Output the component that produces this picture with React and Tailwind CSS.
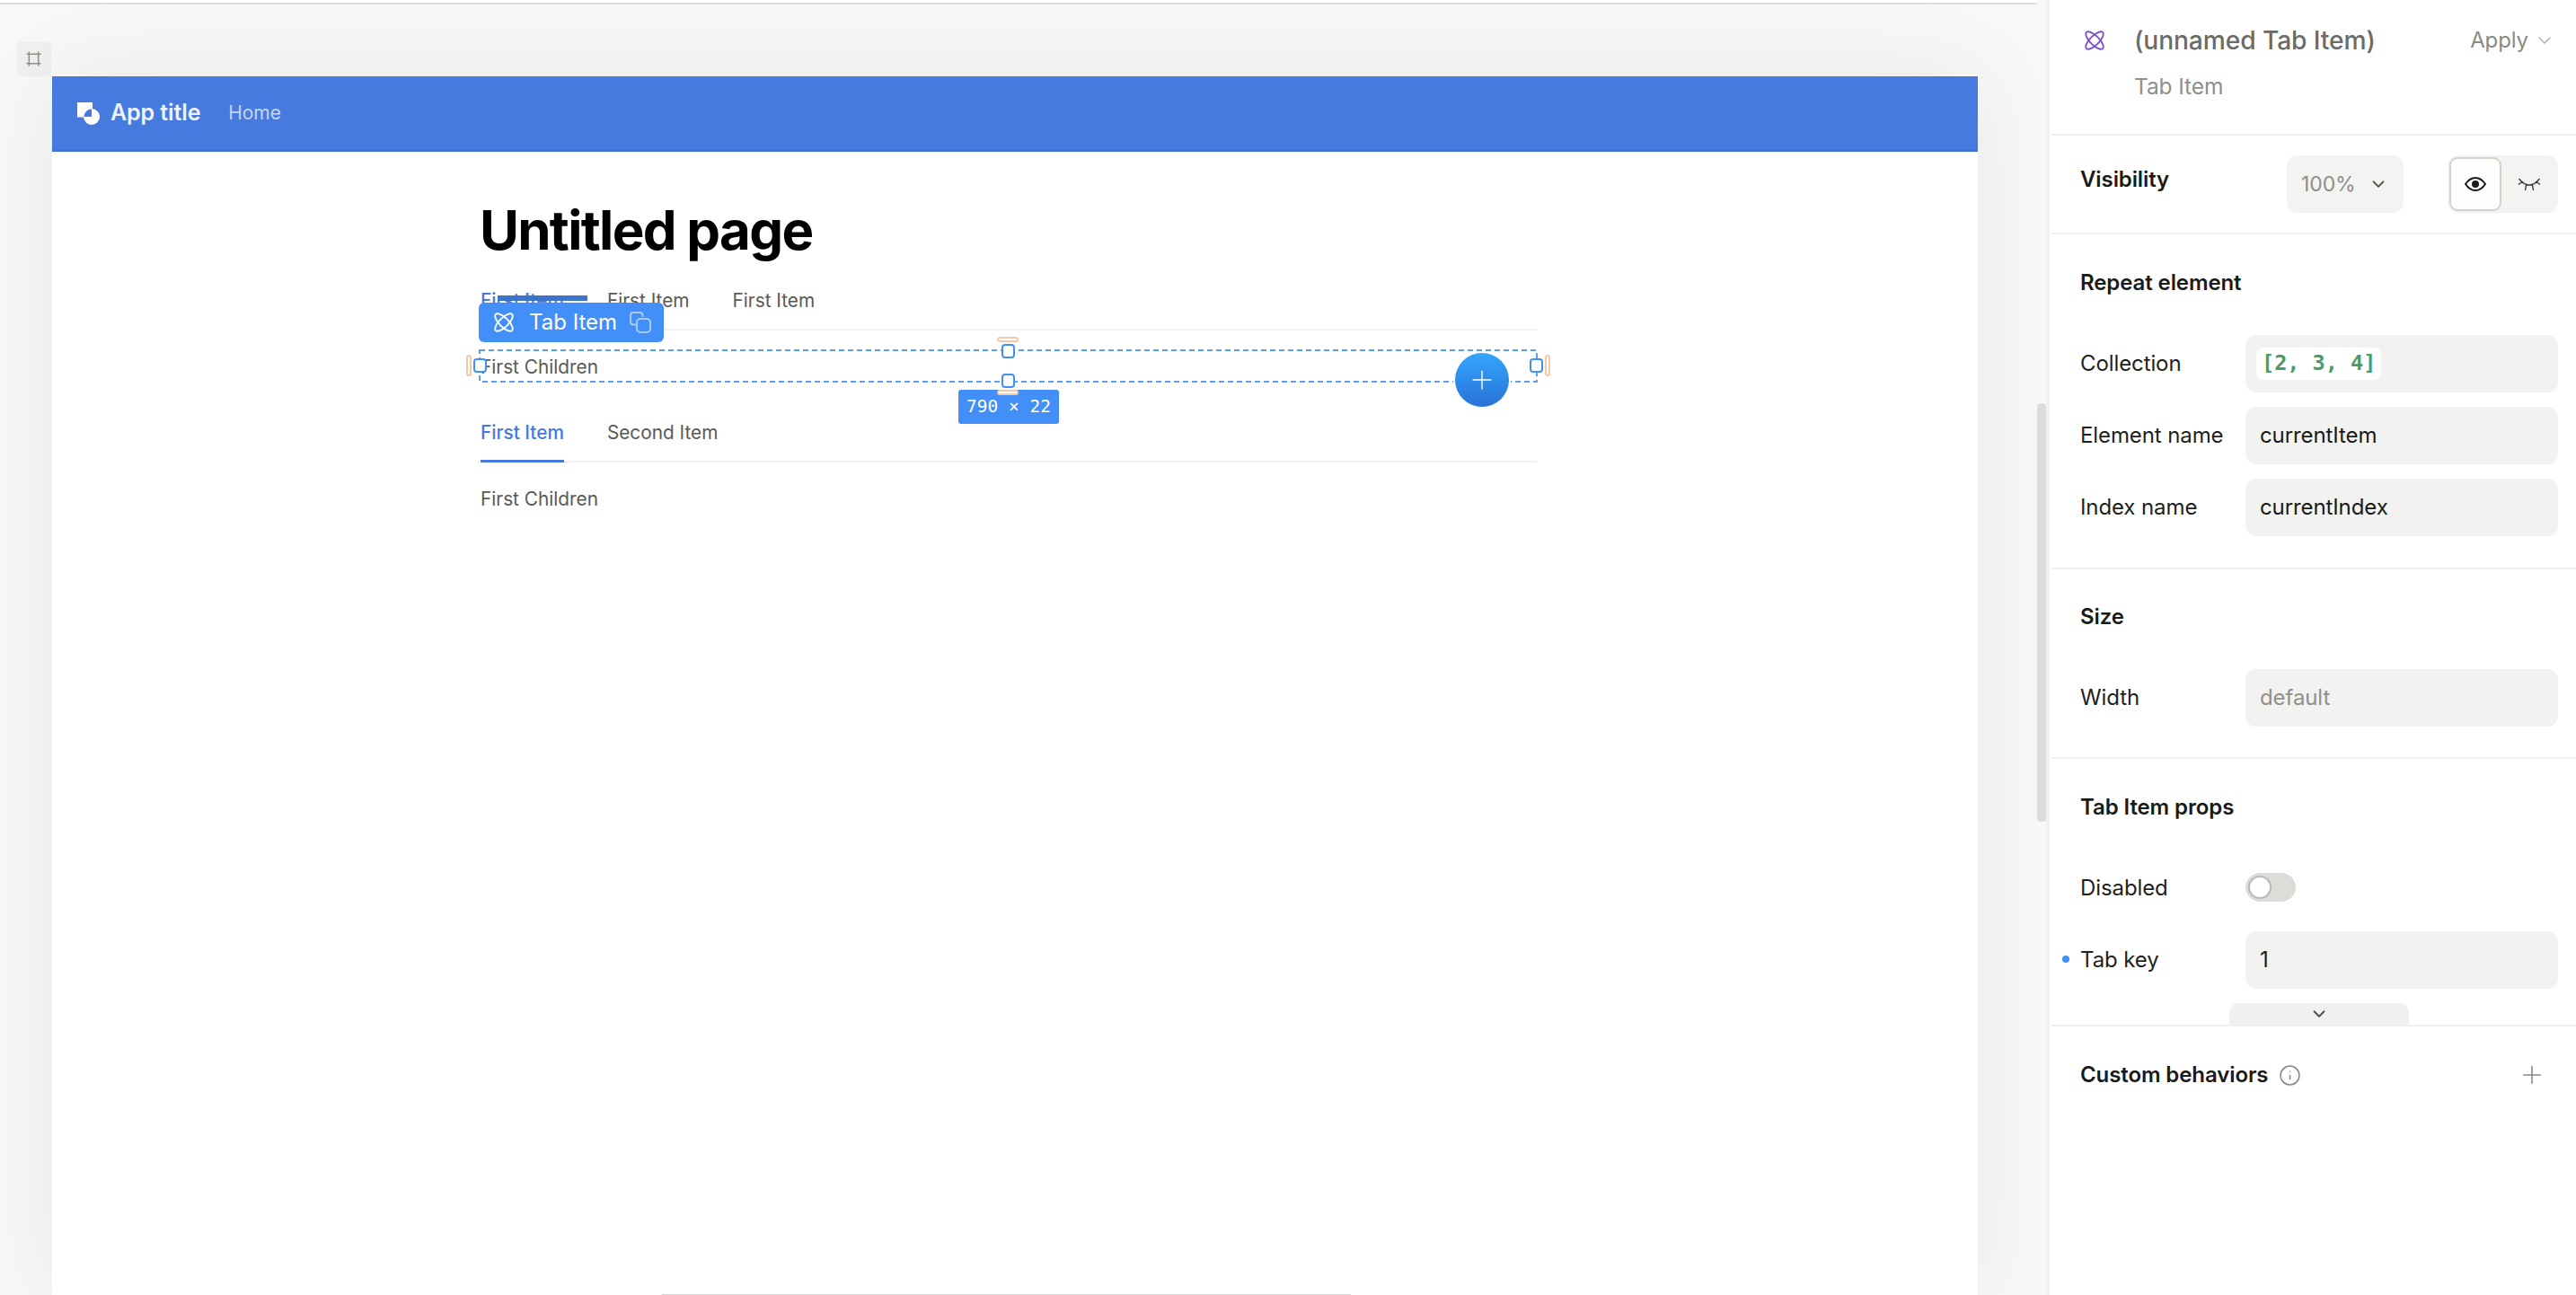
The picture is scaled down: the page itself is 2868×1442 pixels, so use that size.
import { Plus, ChevronDown, Info } from "lucide-react";

function TabIcon({ className }) {
  return (
    <svg viewBox="0 0 24 24" fill="none" stroke="currentColor" strokeWidth="2" className={className}>
      <ellipse cx="12" cy="12" rx="14" ry="5.5" transform="rotate(45 12 12)" />
      <ellipse cx="12" cy="12" rx="14" ry="5.5" transform="rotate(-45 12 12)" />
    </svg>
  );
}

function FrameIcon() {
  return (
    <svg viewBox="0 0 18 18" fill="none" stroke="#8f8f8b" strokeWidth="1.6" className="w-[17px] h-[17px]">
      <path d="M0.5 3.500h17M0.500 14.500h17M3.500 0.500v17M14.500 0.500v17" />
    </svg>
  );
}

function Logo() {
  return (
    <svg viewBox="0 0 25 25" className="w-[25px] h-[25px] shrink-0">
      <rect x="0" y="0" width="17" height="16.5" fill="#fff" />
      <circle cx="16" cy="16" r="9" fill="#fff" />
      <path d="M16 16V7.500A8.500 8.500 0 0 0 7.500 16Z" fill="#477ade" />
    </svg>
  );
}

function CopyIcon() {
  return (
    <svg viewBox="0 0 24 24" fill="none" stroke="#a9cbfb" strokeWidth="2" className="w-[24px] h-[24px]">
      <path d="M7 14.500H4a3 3 0 0 1-3-3V4a3 3 0 0 1 3-3h7.500a3 3 0 0 1 3 3v2" />
      <rect x="8" y="8" width="15" height="15" rx="4" />
    </svg>
  );
}

function EyeOpen() {
  return (
    <svg viewBox="0 0 24 16" className="w-[24px] h-[16px]" fill="none" stroke="#1a1a1a" strokeWidth="2">
      <path d="M1 8c3-4.500 6.800-7 11-7s8 2.500 11 7c-3 4.500-6.800 7-11 7S4 12.500 1 8Z" />
      <circle cx="12" cy="8" r="4" fill="#1a1a1a" stroke="none" />
    </svg>
  );
}

function EyeClosed() {
  return (
    <svg viewBox="0 0 26 15" className="w-[26px] h-[15px]" fill="none" stroke="#3a3a38" strokeWidth="1.4">
      <path d="M1.500 1Q13 15 24.500 1M1 7.500 5.500 4M25 7.500 20.500 4M9.500 8l-1 6M16.500 8l1 6" />
    </svg>
  );
}

function Handle({ className }) {
  return <div className={`absolute w-[15px] h-[16px] rounded-[4px] bg-white border-2 border-[#4290f7] ${className}`} />;
}

function Pill({ className }) {
  return <div className={`absolute rounded-full bg-white border-2 border-[#f6c9a6] ${className}`} />;
}

function Tabs({ items, active }) {
  return (
    <div className="flex gap-[48px] h-[50px] border-b-2 border-[#f1f1f1]">
      {items.map((t, i) => (
        <div
          key={i}
          className={`h-[50px] pt-[2px] leading-[30px] ${i === active ? "text-[#4678e0] font-medium border-b-[3px] border-[#477ade]" : "text-[#595959]"}`}
        >
          {t}
        </div>
      ))}
    </div>
  );
}

function Row({ label, value, muted, dot }) {
  return (
    <div className="grid grid-cols-[184px_1fr] items-center h-[64px]">
      <div className="relative text-[#1f1f1d]">
        {dot && <span className="absolute -left-[20px] top-[13px] w-[8px] h-[8px] rounded-full bg-[#4290f7]" />}
        {label}
      </div>
      <div className={`h-[64px] rounded-[12px] bg-[#f2f2f0] pl-[16px] flex items-center ${muted ? "text-[#8f8f8b]" : "text-[#1a1a18]"}`}>
        {value}
      </div>
    </div>
  );
}

function Heading({ children, className = "" }) {
  return <div className={`h-[30px] leading-[30px] font-semibold text-[#1a1a18] ${className}`}>{children}</div>;
}

export default function App() {
  return (
    <div className="flex h-[1442px] overflow-hidden bg-white font-['Inter',sans-serif] text-[24px] tracking-[-0.1px]">
      <div className="flex w-[2282px] shrink-0">
        <div className="relative w-[2268px] h-full overflow-hidden bg-[#f8f8f6]">
          <div className="relative h-[5px] bg-white border-b-2 border-[#dddddd] z-10" />
          <div className="absolute left-[18px] top-[46px] w-[39px] h-[39px] rounded-[6px] bg-[#f0f0ee] flex items-center justify-center">
            <FrameIcon />
          </div>
          <div className="relative ml-[58px] mt-[80px] w-[2144px] h-[1357px] bg-white shadow-[0_0_100px_rgba(0,0,0,0.07)]">
            <div className="h-[84px] bg-[#477ade] border-b-2 border-[#3f71d6] flex items-center pl-[28px] text-white">
              <Logo />
              <span className="ml-[12px] text-[25px] font-semibold text-[#edf2fd]">App title</span>
              <span className="ml-[31px] text-[21px] text-[#c5d6f7]">Home</span>
            </div>
            <div className="ml-[477px] w-[1176px] pt-[51px] text-[20.8px] tracking-normal">
              <h1 className="-ml-[1px] text-[60px] leading-[72px] font-bold text-black tracking-[-1.7px]">Untitled page</h1>
              <div className="mt-[26px]">
                <Tabs items={["First Item", "First Item", "First Item"]} active={0} />
              </div>
              <div className="relative mt-[21px] h-[36px] leading-[40px] text-[#595959]">
                First Children
                <svg className="absolute -left-[2px] top-0 w-[1179px] h-[37px]" fill="none">
                  <rect x="1" y="1" width="1177" height="35" stroke="#5a9ef8" strokeWidth="2" strokeDasharray="6 4" />
                </svg>
                <div className="absolute left-[19px] -top-[60px] w-[100px] h-[6px] bg-[#3b74c9]" />
                <div className="absolute -left-[2px] -top-[52px] w-[206px] h-[44px] rounded-[6px] bg-[#4290f7] flex items-center pl-[17px] text-white text-[24px]">
                  <TabIcon className="w-[22px] h-[22px] shrink-0" />
                  <span className="ml-[17px]">Tab Item</span>
                  <span className="ml-[14px]"><CopyIcon /></span>
                </div>
                <Handle className="left-[580px] -top-[6px]" />
                <Handle className="left-[580px] top-[27px]" />
                <Handle className="-left-[8px] top-[10px]" />
                <Handle className="left-[1168px] top-[10px]" />
                <Pill className="left-[575px] -top-[14px] w-[24px] h-[6px]" />
                <Pill className="left-[575px] top-[45px] w-[24px] h-[6px] z-10" />
                <Pill className="-left-[16px] top-[6px] w-[6px] h-[24px]" />
                <Pill className="left-[1185px] top-[6px] w-[6px] h-[24px]" />
                <div className="absolute left-[532px] top-[45px] w-[112px] h-[38px] rounded-[3px] bg-[#4290f7] flex items-center justify-center text-white text-[19.5px] font-['DejaVu_Sans_Mono',monospace] tracking-normal">
                  790 × 22
                </div>
                <div className="absolute left-[1085px] top-[4px] w-[60px] h-[60px] rounded-full bg-gradient-to-b from-[#33a5fb] to-[#2a73d9] flex items-center justify-center shadow-[0_0_0_2px_#ffffff]">
                  <Plus className="w-[34px] h-[34px] text-white" strokeWidth={1} />
                </div>
              </div>
              <div className="mt-[40px]">
                <Tabs items={["First Item", "Second Item"]} active={0} />
              </div>
              <div className="mt-[26px] leading-[30px] text-[#595959]">First Children</div>
            </div>
            <div className="absolute bottom-0 left-[679px] w-[767px] h-px bg-[#d4d4d4]" />
          </div>
        </div>
        <div className="w-[14px] bg-[#f8f8f6] border-r-4 border-[#f1f1ef] pt-[449px]">
          <div className="w-[10px] h-[466px] rounded-[4px] bg-[#dddcd9]" />
        </div>
      </div>

      <div className="w-[586px] pl-[2px]">
        <div className="h-[151px] border-b-2 border-[#f0f0ee] pt-[30px] pl-[37px] pr-[23px]">
          <div className="flex items-center h-[30px]">
            <TabIcon className="w-[22px] h-[22px] text-[#7d4fd0] shrink-0" />
            <span className="ml-[33px] text-[28.2px] font-medium text-[#6b6b67]">(unnamed Tab Item)</span>
            <span className="ml-auto text-[#8a8a85]">Apply</span>
            <ChevronDown className="ml-[6px] w-[24px] h-[24px] text-[#b5b5b1]" strokeWidth={1.6} />
          </div>
          <div className="mt-[21px] ml-[55px] h-[30px] leading-[30px] text-[24.5px] text-[#8f8f8b]">Tab Item</div>
        </div>

        <div className="h-[110px] border-b-2 border-[#f0f0ee] pt-[22px] pl-[32px] pr-[20px] flex items-start">
          <div className="w-[230px] h-[54px] flex items-center font-semibold text-[#1a1a18]">Visibility</div>
          <div className="w-[130px] h-[64px] rounded-[12px] bg-[#f3f3f1] flex items-center pl-[16px] text-[#8e8e8a] text-[23px]">
            100%
            <ChevronDown className="ml-[14px] w-[22px] h-[22px] text-[#555552]" />
          </div>
          <div className="ml-[49px] w-[123px] h-[64px] rounded-[12px] bg-[#f3f3f1] flex items-center pl-[2px]">
            <div className="w-[58px] h-[60px] rounded-[9px] bg-[#fdfdfb] border-2 border-[#d2d2ce] flex items-center justify-center">
              <EyeOpen />
            </div>
            <div className="ml-[18px]"><EyeClosed /></div>
          </div>
        </div>

        <div className="border-b-2 border-[#f0f0ee] pt-[39px] pb-[35px] pl-[32px] pr-[20px]">
          <Heading className="mb-[43px]">Repeat element</Heading>
          <div className="flex flex-col gap-[16px]">
            <Row
              label="Collection"
              value={
                <span className="-ml-[4px] px-[6px] h-[36px] rounded-[8px] bg-white flex items-center font-['DejaVu_Sans_Mono',monospace] font-bold text-[#4a9a6b] text-[23.5px] tracking-[0px]">
                  [2, 3, 4]
                </span>
              }
            />
            <Row label="Element name" value="currentItem" />
            <Row label="Index name" value="currentIndex" />
          </div>
        </div>

        <div className="border-b-2 border-[#f0f0ee] pt-[38px] pb-[34px] pl-[32px] pr-[20px]">
          <Heading className="mb-[43px]">Size</Heading>
          <Row label="Width" value="default" muted />
        </div>

        <div className="border-b-2 border-[#f0f0ee] pt-[39px] pl-[32px] pr-[20px]">
          <Heading className="mb-[42px]">Tab Item props</Heading>
          <div className="grid grid-cols-[184px_1fr] items-center h-[64px] mb-[17px]">
            <div className="pt-[2px] text-[#1f1f1d]">Disabled</div>
            <div className="w-[56px] h-[32px] rounded-full bg-[#dcdcd8] flex items-center pl-[3px]">
              <div className="w-[26px] h-[26px] rounded-full bg-white border-2 border-[#b8b8b4]" />
            </div>
          </div>
          <Row label="Tab key" value="1" dot />
          <div className="mt-[16px] ml-[166px] w-[200px] h-[24px] rounded-t-[10px] bg-[#f0f0ee] flex items-center justify-center">
            <ChevronDown className="w-[22px] h-[22px] text-[#4a4a48]" />
          </div>
        </div>

        <div className="pt-[38px] pl-[32px] pr-[33px] flex items-center">
          <Heading>Custom behaviors</Heading>
          <Info className="ml-[12px] w-[25px] h-[25px] text-[#8a8a85]" strokeWidth={1.5} />
          <Plus className="ml-auto w-[32px] h-[32px] text-[#8a8a85]" strokeWidth={1.2} />
        </div>
      </div>
    </div>
  );
}
